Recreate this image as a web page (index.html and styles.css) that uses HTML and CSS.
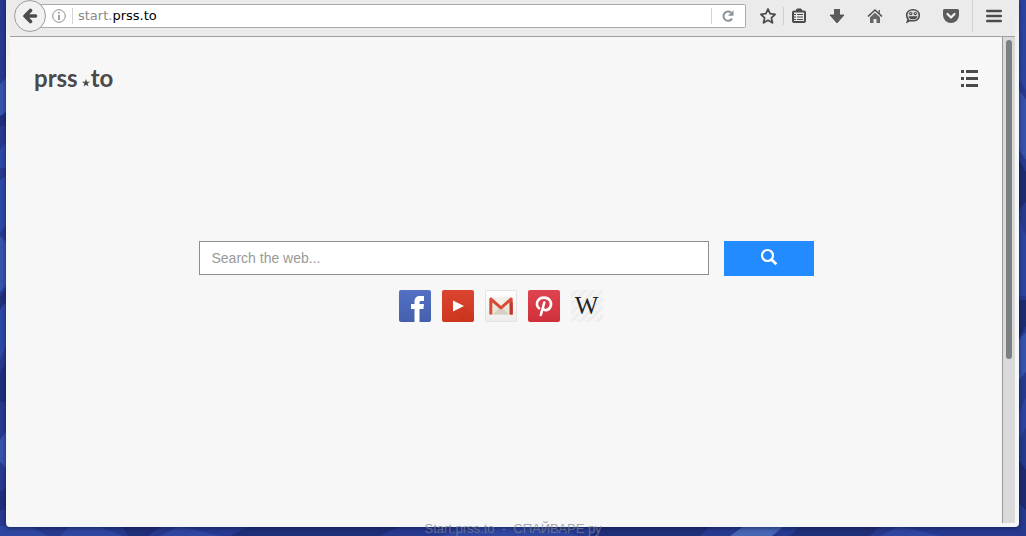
FILE: index.html
```html
<!DOCTYPE html>
<html lang="en">
<head>
<meta charset="utf-8">
<title>Start.prss.to</title>
<link rel="stylesheet" href="styles.css">
</head>
<body>
<svg class="desktop" viewBox="0 0 1026 536" preserveAspectRatio="none" aria-hidden="true">
  <path d="M0 0h1026v536H0z" fill="#26398f"/>
  <path d="M0 84 6 78v34l-6 10zM0 236l6 6v44l-6 6zM0 440l6-8v36l-6-6z" fill="#3653ad"/>
  <path d="M0 150 6 142v26H0zM0 180l6-4v50l-6 6zM0 310l6-8v44l-6 14z" fill="#2d47a6"/>
  <path d="M0 116 6 112v14H0zM0 296l6-6v12l-6 6zM0 372l6-10v40H0zM0 492l6-4v22H0z" fill="#1f2f7c"/>
  <path d="M1019 0h7v90l-7-10zM1019 220l7 16v60h-7zM1019 412l7-14v30l-7 10z" fill="#2c449f"/>
  <path d="M1019 90l7 10v60l-7-10zM1019 340l7-8v40l-7 8z" fill="#3653ab"/>
  <path d="M1019 160l7 12v30l-7 8zM1019 300h7v26l-7 12zM1019 460l7 10v40l-7-6z" fill="#1c2b70"/>
  <path d="M0 526h30l18 10H0zM70 526h28l24 10H60zM180 526l40 10h-60zM480 526h60l40 10H440zM900 526l40 10h-60z" fill="#2e469f"/>
  <path d="M122 526h40l-14 10h-20zM250 526h150l-20 10H230zM600 526h110l-10 10H590zM800 526h80l-10 10h-80z" fill="#1f2e78"/>
  <path d="M744 526h40l-12 10h-42z" fill="#4665b4"/>
</svg>
<div class="window">
  <header class="toolbar">
    <button class="back" type="button" aria-label="Back">
      <svg width="16" height="16" viewBox="0 0 16 16"><path d="M8.500 2.500 3 8l5.500 5.500M4 8h9.500" fill="none" stroke="#4b4b4b" stroke-width="3.600" stroke-linecap="round" stroke-linejoin="round"/></svg>
    </button>
    <div class="address">
      <svg class="info" width="14" height="14" viewBox="0 0 14 14"><circle cx="7" cy="7" r="6.3" fill="none" stroke="#8c8c8c"/><path d="M6.2 3h1.6v1.6H6.2zM6.2 6h1.600v5H6.200z" fill="#8c8c8c"/></svg>
      <span class="rule"></span>
      <a class="url" href="#">start.<span class="domain">prss.to</span></a>
      <span class="rule"></span>
      <button class="reload" type="button" aria-label="Reload">
        <svg width="14" height="14" viewBox="0 0 14 14"><path d="M11 9.600A4.600 4.600 0 1 1 10 3.600" fill="none" stroke="#88959e" stroke-width="2"/><path d="M12.500 1.200v5.600H7z" fill="#88959e"/></svg>
      </button>
    </div>
    <button class="tool star" type="button" aria-label="Bookmark this page">
      <svg width="18" height="18" viewBox="0 0 18 18"><path d="m9 2 2.100 4.700 5 .6-3.700 3.500 1 5L9 13.300l-4.400 2.500 1-5L1.900 7.300l5-.6z" fill="none" stroke="#4b4b4b" stroke-width="1.800" stroke-linejoin="round"/></svg>
    </button>
    <span class="divider"></span>
    <button class="tool list" type="button" aria-label="Bookmarks">
      <svg width="16" height="16" viewBox="0 0 16 16"><path d="M5 2a1.500 1.500 0 0 1 1.500-1.500h3A1.500 1.500 0 0 1 11 2v2H5z" fill="#4b4b4b"/><rect x="2" y="3.500" width="12" height="10.500" rx="1" fill="none" stroke="#4b4b4b" stroke-width="2"/><path d="M1 6.500h4M6 6.500h6M1 9h4M6 9h6M1 11.500h4M6 11.500h6" stroke="#4b4b4b" stroke-width="1.200"/></svg>
    </button>
    <button class="tool" type="button" aria-label="Downloads">
      <svg width="16" height="16" viewBox="0 0 16 16"><path d="M5 1h6v6h4l-7 8-7-8h4z" fill="#5c5c5c"/><path d="M1 7h4M11 7h4l-7 8-7-8" fill="none" stroke="#444" stroke-width=".8"/></svg>
    </button>
    <button class="tool" type="button" aria-label="Home">
      <svg width="16" height="16" viewBox="0 0 16 16"><path d="M1 8.500 8 2l7 6.500" fill="none" stroke="#4b4b4b" stroke-width="1.600"/><path d="M11.500 2H13v4l-1.500-1.500zM3 9.200 8 4.800l5 4.400V15H9.500v-4h-3v4H3z" fill="#666"/></svg>
    </button>
    <button class="tool" type="button" aria-label="Chat">
      <svg width="16" height="16" viewBox="0 0 16 16"><path d="M8 1.800c3.700 0 6.300 2.200 6.300 5.500s-2.600 5.500-6.300 5.500c-1 0-1.800-.1-2.600-.4L2.300 14l.9-2.900C2.200 10.200 1.700 8.800 1.700 7.300c0-3.300 2.600-5.500 6.300-5.500z" fill="#ddd" stroke="#4b4b4b" stroke-width="1.600"/><circle cx="5.700" cy="5.600" r="1.700" fill="#4b4b4b"/><circle cx="10.300" cy="5.600" r="1.700" fill="#4b4b4b"/><circle cx="5.700" cy="5.400" r=".6" fill="#ddd"/><circle cx="10.300" cy="5.400" r=".6" fill="#ddd"/><path d="M3.500 8.200h9c-.4 2-2.100 3-4.500 3s-4.100-1-4.500-3z" fill="#4b4b4b"/></svg>
    </button>
    <button class="tool" type="button" aria-label="Save to Pocket">
      <svg width="16" height="16" viewBox="0 0 16 16"><path d="M1.500 1h13A1.500 1.500 0 0 1 16 2.500V7A8 8 0 0 1 0 7V2.500A1.500 1.500 0 0 1 1.500 1z" fill="#5c5c5c"/><path d="m4.500 6 3.500 3.500L11.500 6" fill="none" stroke="#f2f2f2" stroke-width="2.200" stroke-linecap="round" stroke-linejoin="round"/></svg>
    </button>
    <span class="divider tall"></span>
    <button class="tool menu" type="button" aria-label="Menu">
      <svg width="16" height="14" viewBox="0 0 16 14"><path d="M1.300 2h13.400M1.300 7h13.400M1.300 12h13.400" stroke="#4b4b4b" stroke-width="2.600" stroke-linecap="round"/></svg>
    </button>
  </header>
  <div class="viewport">
    <main class="page">
      <div class="masthead">
        <a class="logo" href="#">prss<svg width="8" height="8" viewBox="0 0 8 8"><path d="m4 0 1 2.800h3L5.600 4.600l.9 3L4 5.800l-2.500 1.800.9-3L0 2.800h3z" fill="#4a4a4a"/></svg>to</a>
        <button class="options" type="button" aria-label="Options">
          <svg width="17" height="17" viewBox="0 0 17 17"><path d="M0 0h3v3H0zM5 0h12v3H5zM0 7h3v3H0zM5 7h12v3H5zM0 14h3v3H0zM5 14h12v3H5z" fill="#4a4a4a"/></svg>
        </button>
      </div>
      <form class="search">
        <input class="query" type="text" placeholder="Search the web..." aria-label="Search the web">
        <button class="submit" type="button" aria-label="Search">
          <svg width="18" height="18" viewBox="0 0 18 18"><circle cx="7.500" cy="7.500" r="5.500" fill="none" stroke="#fff" stroke-width="2.200"/><path d="m11.500 11.500 4.800 4.800" stroke="#fff" stroke-width="2.800"/></svg>
        </button>
      </form>
      <nav class="links">
        <a class="link facebook" href="#" aria-label="Facebook">
          <svg width="32" height="32" viewBox="0 0 32 32"><path d="M15.500 32V19H12v-5h3.500v-2.500C15.500 7.800 17.800 6 21 6h4v5h-2.500c-1.500 0-2 .6-2 1.800V14H25l-.6 5h-3.900v13z" fill="#fff"/></svg>
        </a>
        <a class="link youtube" href="#" aria-label="YouTube">
          <svg width="32" height="32" viewBox="0 0 32 32"><path d="M21.500 16 32 26.500V32H21L11 21z" fill="#b82e17" opacity=".15"/><path d="m11 10.500 11 5.500-11 5.500z" fill="#fff"/></svg>
        </a>
        <a class="link gmail" href="#" aria-label="Gmail">
          <svg width="32" height="32" viewBox="0 0 32 32"><path d="M5 7.500h22v17H5z" fill="#e9e5d8"/><path d="m8 24.500 8-8 8 8z" fill="#d5d0c1"/><path d="m5 7.500 11 10 11-10z" fill="#f3f0e8"/><path d="M5.800 24.500V9L16 17.800 26.200 9v15.500" fill="none" stroke="#d94a38" stroke-width="3" stroke-linejoin="round"/><path d="M24.700 12.500v12h3v-12z" fill="#b93a2c"/></svg>
        </a>
        <a class="link pinterest" href="#" aria-label="Pinterest">
          <svg width="32" height="32" viewBox="0 0 32 32"><path d="M11 18.200C8.600 16.500 8.300 13 10 10.500c2.700-4 9.800-3.700 12.200.3 2.200 4-.4 9.100-4.200 9.300-1.700 0-2.700-.8-3-1.800M16.300 12.500 12.800 25" fill="none" stroke="#fff" stroke-width="2.600" stroke-linecap="round"/></svg>
        </a>
        <a class="link wikipedia" href="#" aria-label="Wikipedia">W</a>
      </nav>
    </main>
    <div class="scrollbar"><div class="thumb"></div></div>
  </div>
</div>
<div class="caption">Start.prss.to&nbsp; -&nbsp; СПАЙВАРЕ ру</div>
</body>
</html>
```
FILE: styles.css
```css
* {
  box-sizing: border-box;
}

body {
  margin: 0;
  min-height: 100vh;
  display: flex;
  flex-direction: column;
  padding: 0 7px 9px 6px;
  position: relative;
  font-family: "Liberation Sans", Arial, sans-serif;
  background: #26398f;
}

button {
  padding: 0;
  border: 0;
  background: none;
}

svg {
  display: block;
}

.desktop {
  position: absolute;
  inset: 0;
  width: 100%;
  height: 100%;
}

.window {
  flex: 1;
  display: flex;
  flex-direction: column;
  position: relative;
  padding: 0 4px 4px;
  background: linear-gradient(#ebebeb, #f4f6f8 80px);
  border-radius: 0 0 4px 4px;
  box-shadow: 0 1px 4px rgba(10, 15, 50, 0.6);
}

.toolbar {
  display: flex;
  align-items: flex-start;
  height: 37px;
  padding-left: 4px;
  background: #ebebeb;
  border-bottom: 1px solid #a0a0a0;
}

.back {
  display: grid;
  place-items: center;
  width: 32px;
  height: 32px;
  border: 1px solid #9c9c9c;
  border-radius: 50%;
  background: #f1f1f1;
  position: relative;
  z-index: 1;
}

.address {
  flex: 1;
  display: flex;
  align-items: center;
  height: 24px;
  margin: 4px 7px 0 -8px;
  padding: 0 10px 0 14px;
  border: 1px solid #aaa;
  border-left: 0;
  border-radius: 0 2px 2px 0;
  background: #fff;
}

.rule {
  width: 1px;
  height: 16px;
  background: #d4d4d4;
}

.info {
  margin-right: 6px;
}

.url {
  flex: 1;
  margin-left: 5px;
  font: 13px/16px "DejaVu Sans", sans-serif;
  color: #8a8a8a;
  text-decoration: none;
}

.domain {
  color: #000;
}

.reload {
  margin-left: 9px;
}

.tool {
  display: grid;
  place-items: center;
  width: 38px;
  height: 32px;
}

.star {
  width: 30px;
}

.list {
  width: 30px;
  margin-right: 4px;
}

.menu {
  width: 42px;
}

.divider {
  width: 1px;
  height: 18px;
  margin-top: 7px;
  background: #cfcfcf;
}

.tall {
  height: 32px;
  margin: 0 0 0 2px;
}

.viewport {
  flex: 1;
  display: flex;
}

.page {
  flex: 1;
  padding: 27px 24px;
  background: #f7f7f7;
}

.masthead {
  display: flex;
  justify-content: space-between;
  align-items: center;
  height: 28px;
}

.logo {
  display: flex;
  align-items: center;
  font: bold 24px/28px Lato, sans-serif;
  color: #4a4a4a;
  text-decoration: none;
}

.logo svg {
  margin: 9px 1px 0 4px;
}

.search {
  display: flex;
  gap: 15px;
  max-width: 615px;
  margin: 149px auto 14px;
}

.query {
  flex: 1;
  min-width: 0;
  height: 34px;
  padding: 0 12px;
  border: 1px solid #8f8f8f;
  border-radius: 0;
  background: #fff;
  font: 14px "Liberation Sans", Arial, sans-serif;
}

.query::placeholder {
  color: #999;
}

.submit {
  display: grid;
  place-items: center;
  width: 90px;
  height: 35px;
  padding-bottom: 3px;
  background: #228bff;
}

.links {
  display: flex;
  justify-content: center;
}

.link {
  width: 32px;
  height: 32px;
  margin-right: 11px;
  border-radius: 2px;
  overflow: hidden;
}

.facebook {
  background: linear-gradient(#5470c2, #4460ad);
}

.youtube {
  background: linear-gradient(#db4430, #ce3620);
}

.gmail {
  background: linear-gradient(#fff, #ececec);
  box-shadow: inset 0 0 0 1px #e3e3e3;
}

.pinterest {
  background: linear-gradient(#e04450, #d02f3b);
}

.wikipedia {
  background: repeating-linear-gradient(135deg, #f5f5f5 0 3px, #eee 3px 6px);
  font: 25px/32px "Liberation Serif", serif;
  text-align: center;
  text-decoration: none;
  color: #222;
}

.scrollbar {
  width: 13px;
  padding: 3px 3px 0;
  border-left: 1px solid #9a9a9a;
  background: #dadada;
}

.thumb {
  width: 6px;
  height: 66%;
  border-radius: 3px;
  background: #7b8181;
}

.caption {
  position: absolute;
  bottom: 0;
  left: 0;
  right: 0;
  text-align: center;
  font-size: 13px;
  line-height: 15px;
  color: rgba(128, 132, 145, 0.7);
}
```
